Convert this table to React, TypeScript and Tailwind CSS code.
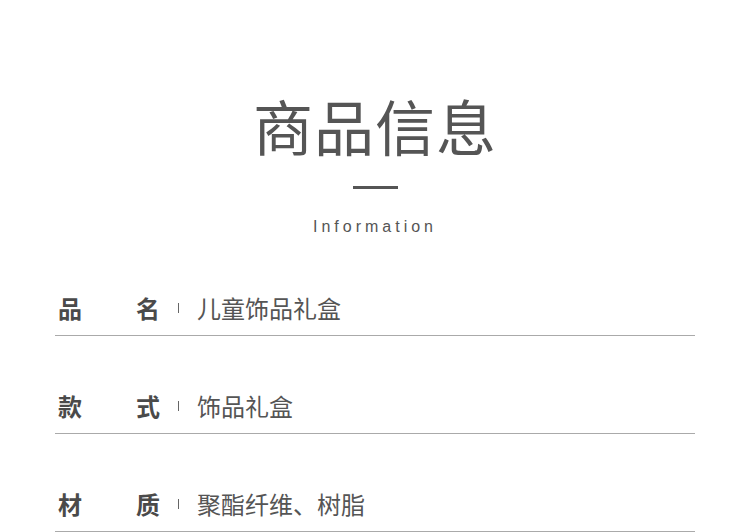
const rows = [
  { label: ['品', '名'], value: '儿童饰品礼盒' },
  { label: ['款', '式'], value: '饰品礼盒' },
  { label: ['材', '质'], value: '聚酯纤维、树脂' },
];

export default function App() {
  return (
    <div className="w-[750px] h-[532px] overflow-hidden bg-white font-['Noto_Sans_CJK_SC',sans-serif] text-[#555]">
      <div className="flex flex-col items-center pt-[85px]">
        <h1 className="text-[60px] leading-[80px] font-normal tracking-[1px] text-[#555]">
          商品信息
        </h1>
        <div className="mt-[21px] h-[3px] w-[45px] bg-[#555]" />
        <p className="mt-[28px] text-[16px] leading-[20px] tracking-[4px] text-[#555] font-['Liberation_Sans',sans-serif]">
          Information
        </p>
      </div>

      <div className="mx-[55px] mt-[1px]">
        {rows.map((row) => (
          <div
            key={row.value}
            className="flex items-end h-[98px] pb-[9px] border-b border-[#aaa]"
          >
            <div className="flex items-center h-[36px]">
              <div className="flex w-[105px] justify-between pl-[3px] text-[24px] leading-[36px] font-bold text-[#4a4a4a]">
                <span>{row.label[0]}</span>
                <span>{row.label[1]}</span>
              </div>
              <div className="ml-[18px] h-[10px] w-px bg-[#666]" />
              <div className="ml-[18px] text-[24px] leading-[36px] text-[#555]">{row.value}</div>
            </div>
          </div>
        ))}
      </div>
    </div>
  );
}
